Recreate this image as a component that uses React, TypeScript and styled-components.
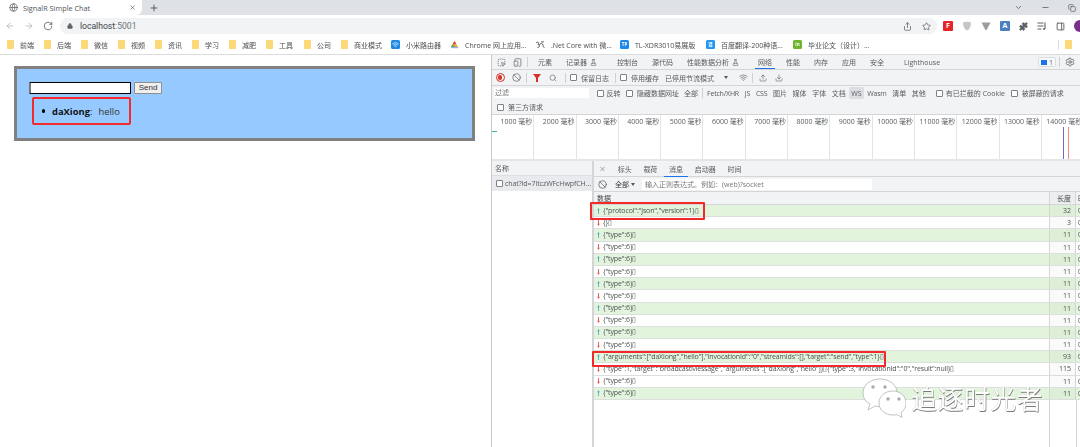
import React from "react";
import styled, { createGlobalStyle } from "styled-components";
import { ArrowLeft, ArrowRight, RotateCw, Lock, Share, Star, Puzzle, X, Plus, Globe, ChevronDown, Minus, Settings, Search, Ban, Upload, Download, Wifi, FlaskConical, SquareDashedMousePointer, TabletSmartphone, PanelRight, Copy } from "lucide-react";

const Global = createGlobalStyle`
  html, body { margin: 0; padding: 0; background: #fff; overflow: hidden; }
  * { box-sizing: border-box; }
  body { font-family: "Open Sans", "Noto Sans CJK SC", sans-serif; color: #3c4043; }
`;
const Shell = styled.div`
  width: 1080px; height: 447px; overflow: hidden; display: flex; flex-direction: column; position: relative;
  filter: blur(0.35px);
`;
const TabStrip = styled.div`
  height: 15px; background: #dee1e6; display: flex; align-items: center; flex: none; color: #45484c;
`;
const ActiveTab = styled.div`
  width: 142px; height: 15px; background: #fff; border-bottom-right-radius: 6px; display: flex; align-items: center;
  padding: 0 6px 0 9px; gap: 5px; font-size: 7.3px; white-space: nowrap;
`;
const TabTitle = styled.span` flex: 1; color: #50545a; `;
const NewTab = styled.div` margin-left: 7px; display: flex; `;
const WinControls = styled.div` margin-left: auto; display: flex; align-items: center; gap: 18px; padding-right: 4px; color: #55585c; `;
const Toolbar = styled.div`
  height: 18px; margin-top: 2px; background: #fff; display: flex; align-items: center; flex: none; padding-left: 5px; color: #6b6f74;
`;
const Nav = styled.div` display: flex; gap: 9px; width: 55px; color: #b4b6b9; `;
const Pill = styled.div`
  width: 878px; height: 16px; border-radius: 8px; background: #f1f3f4; display: flex; align-items: center; padding: 0 6px 0 7px; gap: 7px;
  font-family: "Roboto", sans-serif; font-size: 8.6px; color: #404346;
`;
const Muted = styled.span` color: #70757a; `;
const PillEnd = styled.div` margin-left: auto; display: flex; gap: 10px; color: #5f6368; `;
const Ext = styled.div` margin-left: 6px; display: flex; align-items: center; gap: 9px; color: #5f6368; `;
const ExtBox = styled.span<{ $bg: string }>`
  width: 10px; height: 10px; border-radius: 1px; background: ${p => p.$bg}; display: block; flex: none;
  font-size: 7px; color: #fff; line-height: 10px; text-align: center; font-weight: 700;
`;
const Avatar = styled.span` width: 12px; height: 12px; border-radius: 50%; background: #7b2d8b; flex: none; margin-right: -6px; `;
const Bookmarks = styled.div`
  height: 20px; flex: none; border-bottom: 1px solid #dadce0; display: flex; align-items: center; padding-left: 7px; font-size: 7px; color: #4a4d50; white-space: nowrap;
`;
const Bookmark = styled.div<{ $w: number }>` width: ${p => p.$w}px; display: flex; align-items: center; gap: 6px; flex: none; overflow: hidden; `;
const Folder = styled.span` width: 7px; height: 9px; background: #fbd977; border-radius: 1px; flex: none; `;
const BmSep = styled.span` width: 1px; height: 10px; background: #dadce0; margin: 0 6px 0 0; flex: none; `;
const BmIcon = styled.span<{ $bg: string }>`
  width: 9px; height: 9px; flex: none; background: ${p => p.$bg}; border-radius: 1.5px; display: flex; align-items: center; justify-content: center;
  font-size: 4.5px; line-height: 9px; color: #fff; font-weight: 700;
`;
const Main = styled.div` flex: 1; display: flex; min-height: 0; `;
const Page = styled.div`
  width: 491px; flex: none; padding: 11px 0 0 14px; font-family: "Liberation Sans", "Open Sans", sans-serif; color: #000;
`;
const ChatBox = styled.div`
  width: 461px; height: 75px; border: 3px solid #808080; background: #96c9ff; padding: 13px 12px;
`;
const FormRow = styled.div` display: flex; align-items: center; gap: 3px; height: 12px; `;
const TextInput = styled.div`
  width: 102px; height: 12px; background: #fff; border: 1px solid #000; border-left: 2px solid #777; border-radius: 1px;
`;
const SendButton = styled.div`
  width: 28px; height: 12px; background: #efefef; border: 1px solid #8f8f8f; border-radius: 1px; font-size: 8px; line-height: 10px; text-align: center; color: #333;
`;
const Highlight = styled.div`
  width: 99px; height: 28px; margin: 3px 0 0 3px; border: 2px solid #f22a2a; border-radius: 2px; display: flex; align-items: center; padding-left: 7.5px;
  font-family: "Open Sans", sans-serif; font-size: 9.4px; color: #333;
`;
const Dot = styled.span` width: 3.5px; height: 3.5px; border-radius: 50%; background: #000; margin-right: 7px; flex: none; `;
const Strong = styled.b` font-weight: 700; color: #111; white-space: nowrap; `;
const Colon = styled.span` margin-right: 6px; `;
const Devtools = styled.div`
  flex: 1; min-width: 0; display: flex; flex-direction: column; border-left: 1px solid #c8cacc; font-size: 7px; color: #585c60; white-space: nowrap;
`;
const Bar = styled.div<{ $h: number }>`
  height: ${p => p.$h}px; flex: none; display: flex; align-items: center; background: #f1f3f4; border-bottom: 1px solid #d3d5d8;
`;
const MainTabs = styled(Bar)` gap: 14px; padding-left: 5px; `;
const TabIcons = styled.div` display: flex; align-items: center; gap: 7px; width: 31px; margin-right: -4px; color: #6a6e73; flex: none; `;
const IconSep = styled.span` width: 1px; height: 10px; background: #cfd1d4; flex: none; margin-left: -2px; `;
const MainTab = styled.div<{ $active?: boolean; $ml?: number; $mr?: number }>`
  height: 100%; display: flex; align-items: center; gap: 3px; margin-left: ${p => p.$ml ?? 0}px; margin-right: ${p => p.$mr ?? 0}px; position: relative;
  ${p => p.$active ? "&::after { content: ''; position: absolute; left: -3px; right: -3px; bottom: 0; height: 1.5px; background: #1a73e8; }" : ""}
`;
const TabsEnd = styled.div` margin-left: auto; display: flex; align-items: center; padding-right: 5px; color: #5f6368; `;
const IssueBadge = styled.div`
  width: 18px; height: 10px; border: 1px solid #dadce0; border-radius: 2px; display: flex; align-items: center; justify-content: center; gap: 2px; background: #f8f9fa;
`;
const BlueChip = styled.span` width: 6px; height: 5px; background: #1a73e8; display: block; `;
const VSep = styled.span<{ $l?: number; $r?: number }>` width: 1px; height: 10px; background: #cfd1d4; flex: none; margin: 0 ${p => p.$r ?? 4}px 0 ${p => p.$l ?? 4}px; `;
const ToolRow = styled(Bar)``;
const IconSlot = styled.span<{ $w?: number }>` width: ${p => p.$w ?? 16}px; display: flex; justify-content: center; color: #6a6e73; flex: none; `;
const RecordDot = styled.span`
  width: 9px; height: 9px; border-radius: 50%; border: 1.2px solid #d93025; display: flex; align-items: center; justify-content: center;
  &::after { content: ""; width: 4.5px; height: 4.5px; border-radius: 50%; background: #d93025; }
`;
const FilterTri = styled.svg` display: block; `;
const Caret = styled.span`
  width: 0; height: 0; border-left: 2.5px solid transparent; border-right: 2.5px solid transparent; border-top: 3px solid #54585c; flex: none;
`;
const Check = styled.span` width: 7px; height: 7px; border: 1px solid #808080; border-radius: 1px; background: #fff; flex: none; `;
const CheckLabel = styled.label<{ $ml?: number; $gap?: number }>` display: flex; align-items: center; gap: ${p => p.$gap ?? 4}px; margin-left: ${p => p.$ml ?? 0}px; flex: none; `;
const Plain = styled.span<{ $ml?: number }>` margin-left: ${p => p.$ml ?? 0}px; flex: none; `;
const FilterRow = styled.div`
  height: 14px; flex: none; display: flex; align-items: center; background: #f1f3f4; padding-left: 2px;
`;
const FilterInput = styled.div` width: 95px; height: 10px; background: #fff; line-height: 10px; padding-left: 1px; color: #777; flex: none; `;
const Chips = styled.div` display: flex; align-items: center; gap: 5.6px; flex: none; `;
const Chip = styled.span<{ $on?: boolean; $tight?: boolean }>`
  ${p => p.$tight ? "letter-spacing: -0.2px;" : ""}
  ${p => p.$on ? "background: #dcdee1; border-radius: 2px; padding: 1.5px 2px; margin: 0 -2px;" : ""}
`;
const ThirdRow = styled(Bar)` padding-left: 5px; `;
const Timeline = styled.div`
  height: 46px; flex: none; display: grid; grid-template-columns: repeat(15, 42.3px); background: #fff; border-bottom: 2px solid #e4e5e7; position: relative; overflow: hidden;
`;
const Tick = styled.div` border-right: 1px solid #e3e4e6; text-align: right; padding: 0 1px; line-height: 14px; height: 100%; `;
const Marker = styled.span<{ $x: number; $c: string }>` position: absolute; left: ${p => p.$x}px; top: 12px; bottom: 0; width: 1px; background: ${p => p.$c}; `;
const GreenTick = styled.span` position: absolute; left: 0; top: 16px; width: 5px; height: 1px; background: #3ab5a0; `;
const Split = styled.div` flex: 1; display: flex; min-height: 0; `;
const NameCol = styled.div` width: 102px; flex: none; border-right: 2px solid #d3d5d8; display: flex; flex-direction: column; `;
const NameHead = styled.div` height: 15px; line-height: 15px; background: #f1f3f4; padding-left: 3px; border-bottom: 1px solid #dcdee0; `;
const NameRow = styled.div` height: 15px; display: flex; align-items: center; gap: 2px; background: #e8eaed; padding-left: 4px; overflow: hidden; letter-spacing: -0.08px; `;
const Detail = styled.div` flex: 1; min-width: 0; display: flex; flex-direction: column; `;
const SubTabs = styled(Bar)` padding-left: 5px; gap: 11.7px; `;
const SubTab = styled.div<{ $active?: boolean }>`
  height: 100%; display: flex; align-items: center; position: relative;
  ${p => p.$active ? "&::after { content: ''; position: absolute; left: -5px; right: -5px; bottom: -1px; height: 1.5px; background: #1a73e8; }" : ""}
`;
const MsgFilter = styled(Bar)` padding-left: 4px; `;
const AllBtn = styled.div` width: 27px; display: flex; align-items: center; gap: 2px; margin-left: 8px; color: #333; flex: none; `;
const RegexInput = styled.div` width: 230px; height: 11px; background: #fff; line-height: 11px; padding-left: 3px; color: #777; `;
const TableHead = styled.div` height: 13px; display: flex; background: #f1f3f4; flex: none; border-bottom: 1px solid #d3d5d8; line-height: 13px; color: #444; `;
const DataCell = styled.div` width: 455px; flex: none; padding-left: 3px; display: flex; align-items: center; gap: 3px; `;
const RowText = styled.span` letter-spacing: -0.15px; `;
const LenCell = styled.div` width: 27px; flex: none; text-align: right; padding-right: 4px; border-left: 1px solid #d3d5d8; border-right: 1px solid #d3d5d8; background: rgba(0,0,0,0.02); `;
const TailCell = styled.div` flex: 1; padding-left: 2px; overflow: hidden; `;
const Table = styled.div`
  flex: 1; position: relative; min-height: 0;
  background-image: linear-gradient(#d3d5d8, #d3d5d8), linear-gradient(#d3d5d8, #d3d5d8);
  background-size: 1px 100%, 1px 100%; background-position: 455px 0, 482px 0; background-repeat: no-repeat;
`;
const Row = styled.div<{ $sent: boolean }>`
  height: 12.2px; display: flex; line-height: 12px; background: ${p => p.$sent ? "#e2f4dc" : "#fff"}; border-bottom: 1px solid #dcdfdd; color: #4c5053; position: relative;
`;
const ArrowSvg = styled.svg` flex: none; display: block; `;
const RowMark = styled.span<{ $w: number; $top: number; $left: number; $h: number }>`
  position: absolute; left: ${p => p.$left}px; top: ${p => p.$top}px; width: ${p => p.$w}px; height: ${p => p.$h}px; border: 2px solid #f22a2a; border-radius: 1px; pointer-events: none; z-index: 2;
`;
const Watermark = styled.div`
  position: absolute; right: 37px; top: 378px; display: flex; align-items: center; gap: 5px; z-index: 3;
  font-family: "Noto Sans CJK SC", sans-serif; font-size: 26px; line-height: 40px; color: #fff; letter-spacing: 0.4px;
  text-shadow: 0.6px 0.6px 0 #7a7a7a, -0.3px -0.3px 0 #c4c4c4;
`;

type Msg = { t: string; len: number; sent: boolean; mark?: { w: number; top: number; left: number; h: number } };
const e6 = '{"type":6}\u25AF';
const rows: Msg[] = [
  { t: '{"protocol":"json","version":1}\u25AF', len: 32, sent: true, mark: { w: 115, top: -3, left: -4, h: 18 } },
  { t: '{}\u25AF', len: 3, sent: false },
  { t: e6, len: 11, sent: true }, { t: e6, len: 11, sent: false },
  { t: e6, len: 11, sent: true }, { t: e6, len: 11, sent: false },
  { t: e6, len: 11, sent: true }, { t: e6, len: 11, sent: false },
  { t: e6, len: 11, sent: true }, { t: e6, len: 11, sent: false },
  { t: e6, len: 11, sent: true }, { t: e6, len: 11, sent: false },
  { t: '{"arguments":["daXiong","hello"],"invocationId":"0","streamIds":[],"target":"send","type":1}\u25AF', len: 93, sent: true, mark: { w: 294, top: 0, left: -2, h: 16 } },
  { t: '{"type":1,"target":"broadcastMessage","arguments":["daXiong","hello"]}\u25AF{"type":3,"invocationId":"0","result":null}\u25AF', len: 115, sent: false },
  { t: e6, len: 11, sent: false }, { t: e6, len: 11, sent: true },
];
const ticks = Array.from({ length: 15 }, (_, i) => `${(i + 1) * 1000} 毫秒`);
const folders: [string, number][] = [["前端", 37], ["后端", 37], ["微信", 37], ["视频", 37], ["资讯", 37], ["学习", 37], ["减肥", 37], ["工具", 38], ["公司", 37], ["商业模式", 50]];
const types = ["JS", "CSS", "图片", "媒体", "字体", "文档", "WS", "Wasm", "清单", "其他"];

function WeChat() {
  return (
    <svg width="44" height="40" viewBox="0 0 44 40" fill="#fff" stroke="#a8a8a8" strokeWidth="0.7">
      <path d="M18 1C8 1 1 7 1 15c0 5 3 9 7 11l-2 6 7-4c2 .5 3 .6 5 .6C28 29 35 23 35 15S28 1 18 1z" />
      <path d="M31 13c-8 0-14 5-14 12s6 12 14 12c2 0 3 0 4-.5l5 3-1-5c3-2 5-5 5-9.500 0-7-6-12-13-12z" />
      <circle cx="11" cy="9" r="1.700" fill="#aaa" stroke="none" /><circle cx="23" cy="9" r="1.700" fill="#aaa" stroke="none" />
      <circle cx="26" cy="21" r="1.700" fill="#aaa" stroke="none" /><circle cx="37" cy="21" r="1.700" fill="#aaa" stroke="none" />
    </svg>
  );
}
function DirArrow({ sent }: { sent: boolean }) {
  return sent ? (
    <ArrowSvg width="3" height="6" viewBox="0 0 3 7"><path d="M1.500 0 3 2.500H2V7H1V2.500H0z" fill="#52a9c0" /></ArrowSvg>
  ) : (
    <ArrowSvg width="3" height="6" viewBox="0 0 3 7"><path d="M1.500 7 3 4.500H2V0H1v4.500H0z" fill="#ec4a3e" /></ArrowSvg>
  );
}
function ChromeMark() {
  return (
    <svg width="9" height="9" viewBox="0 0 9 9"><path d="M4.500 1 8 7H1z" fill="#e8a33a" /><path d="M4.500 1 6.200 4H2.800z" fill="#d9453a" /><path d="M1 7l1.800-3 1.700 3z" fill="#5aa65a" /><rect x="1" y="7" width="7" height="1.200" fill="#8ab4e8" /></svg>
  );
}
function OmMark() {
  return (
    <svg width="10" height="10" viewBox="0 0 10 10" fill="none" stroke="#444" strokeWidth="0.9"><path d="M1 3c2-2 3.500 0 2 1.500C5 4.500 5 7.500 2.500 7.500M4.500 5C5 3 8 3 8 5.500c0 1 .5 2 1.500 2M6 1.500c1 .8 2 .8 3 0" /></svg>
  );
}
function GrayShield() {
  return <svg width="10" height="10" viewBox="0 0 10 10"><path d="M1 1.500C3 .5 7 .5 9 1.500 9 6 7.500 8.500 5 9.500 2.500 8.500 1 6 1 1.500z" fill="#c4c6c8" /></svg>;
}
function GrayV() {
  return <svg width="10" height="10" viewBox="0 0 10 10"><path d="M0.500 1.500h9L5.600 9H4.400z" fill="#9a9c9f" /></svg>;
}
function QueueIcon() {
  return <svg width="10" height="10" viewBox="0 0 10 10" fill="none" stroke="#5f6368" strokeWidth="1.100"><path d="M0.500 2h6M0.500 5h6M0.500 8h4M8 1.500V8" /><circle cx="7" cy="8" r="1" fill="#5f6368" stroke="none" /></svg>;
}

export default function App() {
  return (
    <Shell>
      <Global />
      <TabStrip>
        <ActiveTab><Globe size={9} color="#5f6368" /><TabTitle>SignalR Simple Chat</TabTitle><X size={7} color="#45484c" /></ActiveTab>
        <NewTab><Plus size={10} color="#45484c" /></NewTab>
        <WinControls><ChevronDown size={9} /><Minus size={9} /><Copy size={8} /></WinControls>
      </TabStrip>
      <Toolbar>
        <Nav><ArrowLeft size={10} /><ArrowRight size={10} /><RotateCw size={10} color="#5f6368" /></Nav>
        <Pill>
          <Lock size={6} color="#5f6368" fill="#5f6368" />
          <span>localhost<Muted>:5001</Muted></span>
          <PillEnd><Share size={9} /><Star size={9} /></PillEnd>
        </Pill>
        <Ext>
          <ExtBox $bg="#e8232a">F</ExtBox><GrayShield /><GrayV /><ExtBox $bg="#4a7fc0">A</ExtBox>
          <Puzzle size={9} fill="#5f6368" /><QueueIcon /><PanelRight size={9} strokeWidth={2.5} /><Avatar />
        </Ext>
      </Toolbar>
      <Bookmarks>
        {folders.map(([n, w]) => <Bookmark key={n} $w={w}><Folder />{n}</Bookmark>)}
        <Bookmark $w={59}><BmIcon $bg="#1e88e5"><Wifi size={7} color="#fff" /></BmIcon>小米路由器</Bookmark>
        <Bookmark $w={85}><ChromeMark />Chrome 网上应用...</Bookmark>
        <Bookmark $w={85}><OmMark />.Net Core with 微...</Bookmark>
        <Bookmark $w={86}><BmIcon $bg="#1e88e5">TP</BmIcon>TL-XDR3010易展版</Bookmark>
        <Bookmark $w={87}><BmIcon $bg="#2196f3">译</BmIcon>百度翻译-200种语...</Bookmark>
        <Bookmark $w={265}><BmIcon $bg="#6cb52d">in</BmIcon>毕业论文（设计）...</Bookmark>
        <BmSep /><Folder />
      </Bookmarks>
      <Main>
        <Page>
          <ChatBox>
            <FormRow><TextInput /><SendButton>Send</SendButton></FormRow>
            <Highlight><Dot /><Strong>daXiong</Strong><Colon>:</Colon>hello</Highlight>
          </ChatBox>
        </Page>
        <Devtools>
          <MainTabs $h={15}>
            <TabIcons><SquareDashedMousePointer size={9} /><TabletSmartphone size={9} /><IconSep /></TabIcons>
            <MainTab>元素</MainTab>
            <MainTab $mr={6}>记录器 <FlaskConical size={7} /></MainTab>
            <MainTab>控制台</MainTab>
            <MainTab>源代码</MainTab>
            <MainTab $mr={5}>性能数据分析 <FlaskConical size={7} /></MainTab>
            <MainTab $active>网络</MainTab>
            <MainTab>性能</MainTab>
            <MainTab>内存</MainTab>
            <MainTab>应用</MainTab>
            <MainTab>安全</MainTab>
            <MainTab $ml={6}>Lighthouse</MainTab>
            <TabsEnd><IssueBadge><BlueChip />1</IssueBadge><VSep $l={3} $r={5} /><Settings size={10} /></TabsEnd>
          </MainTabs>
          <ToolRow $h={16}>
            <IconSlot><RecordDot /></IconSlot>
            <IconSlot><Ban size={9} /></IconSlot>
            <VSep $l={2} $r={2} />
            <IconSlot><FilterTri width="8" height="8" viewBox="0 0 8 8"><path d="M0 0h8L5 4v4H3V4z" fill="#d93025" /></FilterTri></IconSlot>
            <IconSlot><Search size={8} /></IconSlot>
            <VSep $l={4} $r={4} />
            <CheckLabel><Check />保留日志</CheckLabel>
            <VSep $l={6} $r={4} />
            <CheckLabel><Check />停用缓存</CheckLabel>
            <Plain $ml={6}>已停用节流模式</Plain>
            <IconSlot $w={24}><Caret /></IconSlot>
            <IconSlot $w={10}><Wifi size={9} /></IconSlot>
            <VSep $l={4} $r={4} />
            <IconSlot $w={12}><Upload size={8} /></IconSlot>
            <IconSlot $w={20}><Download size={8} /></IconSlot>
          </ToolRow>
          <FilterRow>
            <FilterInput>过滤</FilterInput>
            <CheckLabel $ml={8} $gap={2.5}><Check />反转</CheckLabel>
            <CheckLabel $ml={5.5}><Check />隐藏数据网址</CheckLabel>
            <Plain $ml={5}>全部</Plain>
            <VSep $l={4} $r={4} />
            <Chips>
              <Chip $tight>Fetch/XHR</Chip>
              {types.map(c => <Chip key={c} $on={c === "WS"} $tight={c === "Wasm" || c === "CSS"}>{c}</Chip>)}
            </Chips>
            <CheckLabel $ml={10} $gap={3}><Check />有已拦截的 Cookie</CheckLabel>
            <CheckLabel $ml={6}><Check />被屏蔽的请求</CheckLabel>
          </FilterRow>
          <ThirdRow $h={15}><CheckLabel><Check />第三方请求</CheckLabel></ThirdRow>
          <Timeline>
            {ticks.map(t => <Tick key={t}>{t}</Tick>)}
            <GreenTick />
            <Marker $x={571} $c="#6a6fc0" /><Marker $x={576} $c="#ef8a8a" />
          </Timeline>
          <Split>
            <NameCol>
              <NameHead>名称</NameHead>
              <NameRow><Check />chat?id=7ItczWFcHwpfCH...</NameRow>
            </NameCol>
            <Detail>
              <SubTabs $h={16}>
                <IconSlot $w={7}><X size={8} /></IconSlot>
                <SubTab>标头</SubTab>
                <SubTab>载荷</SubTab>
                <SubTab $active>消息</SubTab>
                <SubTab>启动器</SubTab>
                <SubTab>时间</SubTab>
              </SubTabs>
              <MsgFilter $h={15}>
                <Ban size={9} color="#5f6368" />
                <AllBtn>全部 <Caret /></AllBtn>
                <RegexInput>输入正则表达式。例如：(web)?socket</RegexInput>
              </MsgFilter>
              <TableHead><DataCell>数据</DataCell><LenCell>长度</LenCell><TailCell>时</TailCell></TableHead>
              <Table>
                {rows.map((r, i) => (
                  <Row key={i} $sent={r.sent}>
                    <DataCell><DirArrow sent={r.sent} /><RowText>{r.t}</RowText></DataCell>
                    <LenCell>{r.len}</LenCell>
                    <TailCell>0</TailCell>
                    {r.mark ? <RowMark $w={r.mark.w} $top={r.mark.top} $left={r.mark.left} $h={r.mark.h} /> : null}
                  </Row>
                ))}
              </Table>
            </Detail>
          </Split>
        </Devtools>
      </Main>
      <Watermark><WeChat />追逐时光者</Watermark>
    </Shell>
  );
}
